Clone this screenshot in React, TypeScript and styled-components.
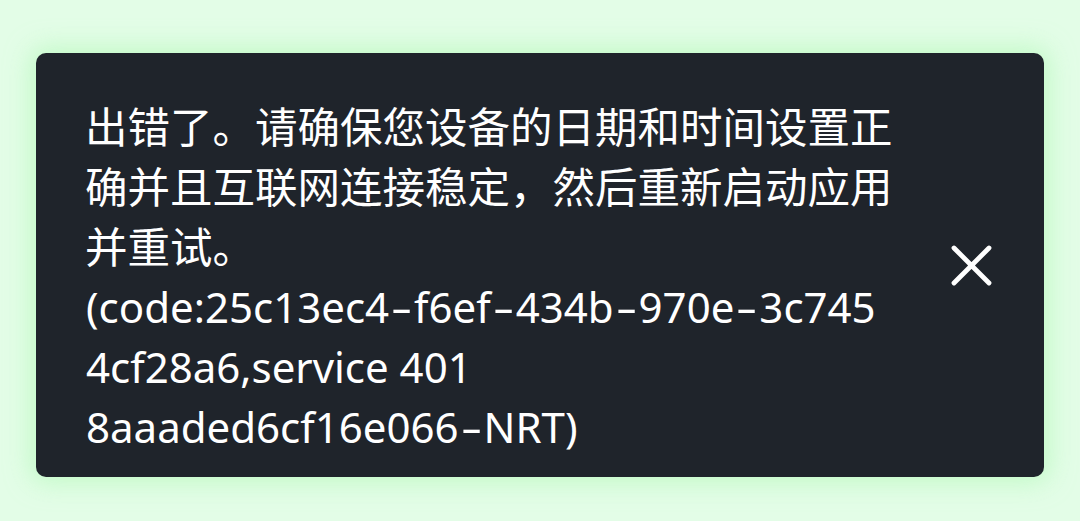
import React from "react";
import styled, { createGlobalStyle } from "styled-components";

const Global = createGlobalStyle`
  html, body { margin: 0; padding: 0; }
  body {
    background: #e3fde7;
    font-family: "Noto Sans", "Noto Sans CJK SC", sans-serif;
  }
`;

const Page = styled.div`
  width: 1080px;
  height: 521px;
  box-sizing: border-box;
  padding: 53px 36px 0 36px;
  background: #e3fde7;
`;

const Toast = styled.div`
  width: 1008px;
  height: 424px;
  box-sizing: border-box;
  display: flex;
  align-items: center;
  padding: 0 52px 0 50px;
  background: #1f242b;
  border-radius: 10px;
  box-shadow: 0 0 24px 6px rgba(170, 250, 175, 0.55);
`;

const Message = styled.div`
  flex: 1;
  padding-top: 24px;
  color: #ffffff;
  line-height: 60px;
  font-family: "Noto Sans", "Noto Sans CJK SC", sans-serif;
  white-space: nowrap;
`;

const Line = styled.div<{ $latin?: boolean }>`
  display: block;
  height: 60px;
  font-size: ${(p) => (p.$latin ? "42px" : "42.5px")};
  margin-left: ${(p) => (p.$latin ? "0" : "-1px")};
`;

const Dash = styled.span`
  display: inline-block;
  width: 25px;
  text-align: center;
  transform: scaleX(1.6);
`;

const CloseButton = styled.button`
  width: 41px;
  height: 41px;
  padding: 0;
  border: none;
  background: transparent;
  display: flex;
  align-items: center;
  justify-content: center;
  cursor: pointer;
`;

const lines: { text: string; latin?: boolean }[] = [
  { text: "出错了。请确保您设备的日期和时间设置正" },
  { text: "确并且互联网连接稳定，然后重新启动应用" },
  { text: "并重试。" },
  { text: "(code:25c13ec4-f6ef-434b-970e-3c745", latin: true },
  { text: "4cf28a6,service 401", latin: true },
  { text: "8aaaded6cf16e066-NRT)", latin: true },
];

function renderText(text: string) {
  const parts = text.split("-");
  return parts.map((p, i) => (
    <React.Fragment key={i}>
      {p}
      {i < parts.length - 1 && <Dash>-</Dash>}
    </React.Fragment>
  ));
}

export default function App() {
  return (
    <>
      <Global />
      <Page>
        <Toast>
          <Message>
            {lines.map((l, i) => (
              <Line key={i} $latin={l.latin}>
                {l.latin ? renderText(l.text) : l.text}
              </Line>
            ))}
          </Message>
          <CloseButton aria-label="关闭">
            <svg width="41" height="41" viewBox="0 0 41 41">
              <path
                d="M3 3 L38 38 M38 3 L3 38"
                stroke="#ffffff"
                strokeWidth="4.8"
                strokeLinecap="round"
                fill="none"
              />
            </svg>
          </CloseButton>
        </Toast>
      </Page>
    </>
  );
}
